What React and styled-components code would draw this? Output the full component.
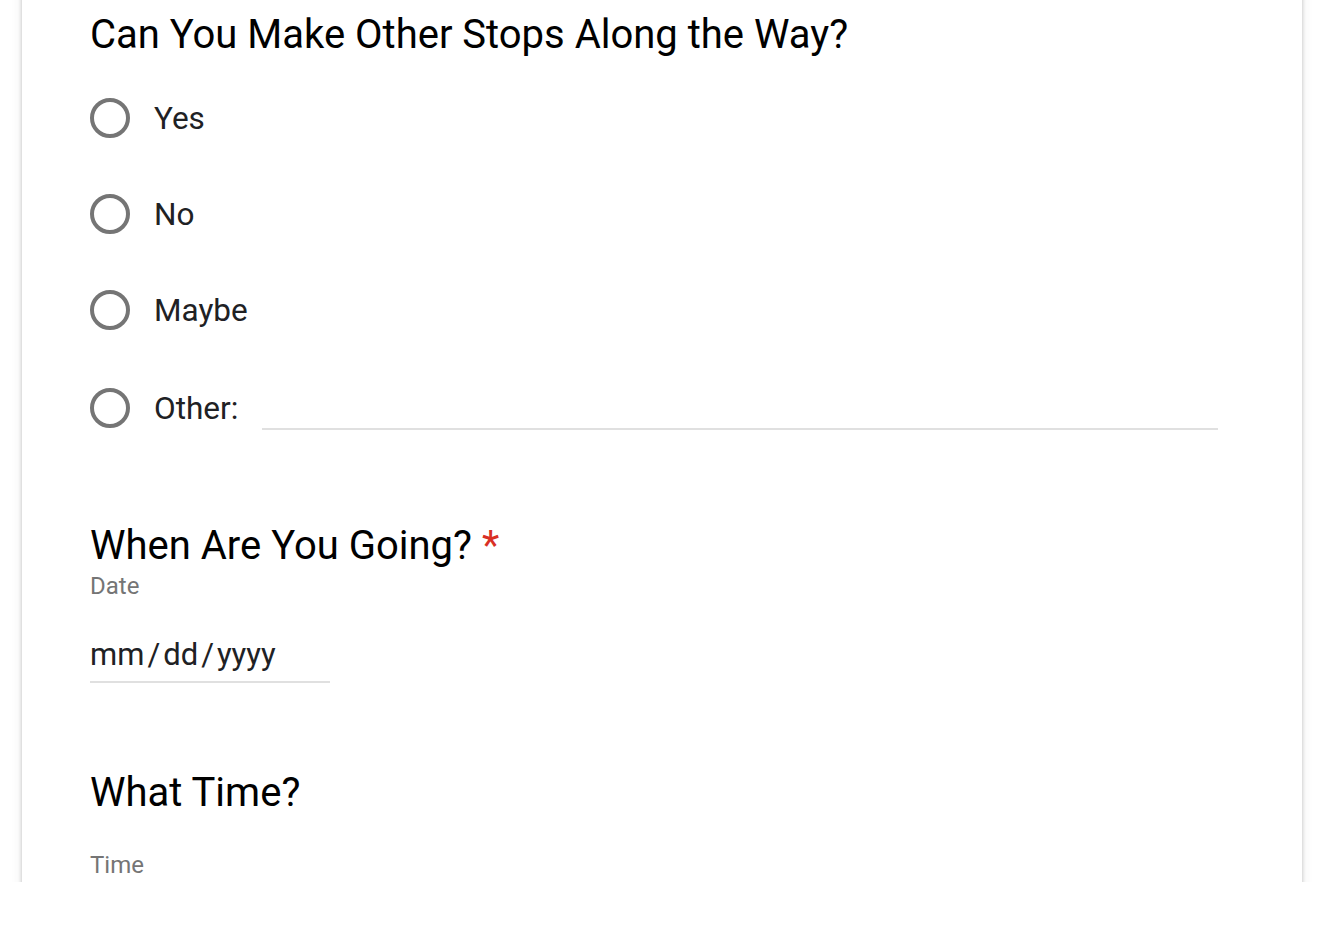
import styled, { createGlobalStyle } from "styled-components";

const GlobalStyle = createGlobalStyle`
  body {
    margin: 0;
    background: #fff;
    font-family: Roboto, "Liberation Sans", Arial, sans-serif;
  }
`;

const options = ["Yes", "No", "Maybe"];

function App() {
  return (
    <>
      <GlobalStyle />
      <Page>
        <Card>
          <Question>
            <Title>Can You Make Other Stops Along the Way?</Title>
            <Options>
              {options.map((opt) => (
                <Option key={opt}>
                  <Radio />
                  <OptionLabel>{opt}</OptionLabel>
                </Option>
              ))}
              <Option $last>
                <Radio />
                <OptionLabel>Other:</OptionLabel>
                <OtherInput />
              </Option>
            </Options>
          </Question>

          <Question>
            <Title>
              When Are You Going?<Required>*</Required>
            </Title>
            <FieldLabel>Date</FieldLabel>
            <DateInput>
              mm<Sep>/</Sep>dd<Sep>/</Sep>yyyy
            </DateInput>
          </Question>

          <Question>
            <Title>What Time?</Title>
            <FieldLabel $spaced>Time</FieldLabel>
          </Question>
        </Card>
      </Page>
    </>
  );
}

const Page = styled.div`
  height: 882px;
  overflow: hidden;
  padding: 0 24px 0 22px;
`;

const Card = styled.div`
  margin-top: -20px;
  min-height: 940px;
  background: #fff;
  box-shadow: 0 0 4px rgba(0, 0, 0, 0.22), 0 0 12px rgba(0, 0, 0, 0.08);
  padding: 31px 84px 0 68px;
`;

const Question = styled.div`
  display: flex;
  flex-direction: column;
  margin-bottom: 66px;
`;

const Title = styled.div`
  font-size: 40px;
  line-height: 48px;
  color: #000;
`;

const Required = styled.span`
  color: #d93025;
  margin-left: 10px;
`;

const Options = styled.div`
  display: flex;
  flex-direction: column;
  padding-top: 11px;
`;

const Option = styled.div`
  display: flex;
  align-items: center;
  height: 96px;
  gap: 24px;
  margin-top: ${(p) => (p.$last ? "2px" : "0")};
`;

const Radio = styled.div`
  width: 40px;
  height: 40px;
  box-sizing: border-box;
  border: 4px solid #757575;
  border-radius: 50%;
  flex-shrink: 0;
`;

const OptionLabel = styled.span`
  font-size: 31.5px;
  color: #202124;
`;

const OtherInput = styled.div`
  flex: 1;
  align-self: flex-end;
  margin-bottom: 26px;
  height: 20px;
  border-bottom: 2px solid #e0e0e0;
`;

const FieldLabel = styled.div`
  font-size: 24px;
  line-height: 28px;
  color: #757575;
  margin-top: ${(p) => (p.$spaced ? "34px" : "2px")};
`;

const DateInput = styled.div`
  width: 240px;
  margin-top: 33px;
  margin-bottom: 20px;
  padding-bottom: 4px;
  font-size: 31px;
  line-height: 44px;
  color: #202124;
  border-bottom: 2px solid #e0e0e0;
`;

const Sep = styled.span`
  padding: 0 3px;
`;

export default App;
